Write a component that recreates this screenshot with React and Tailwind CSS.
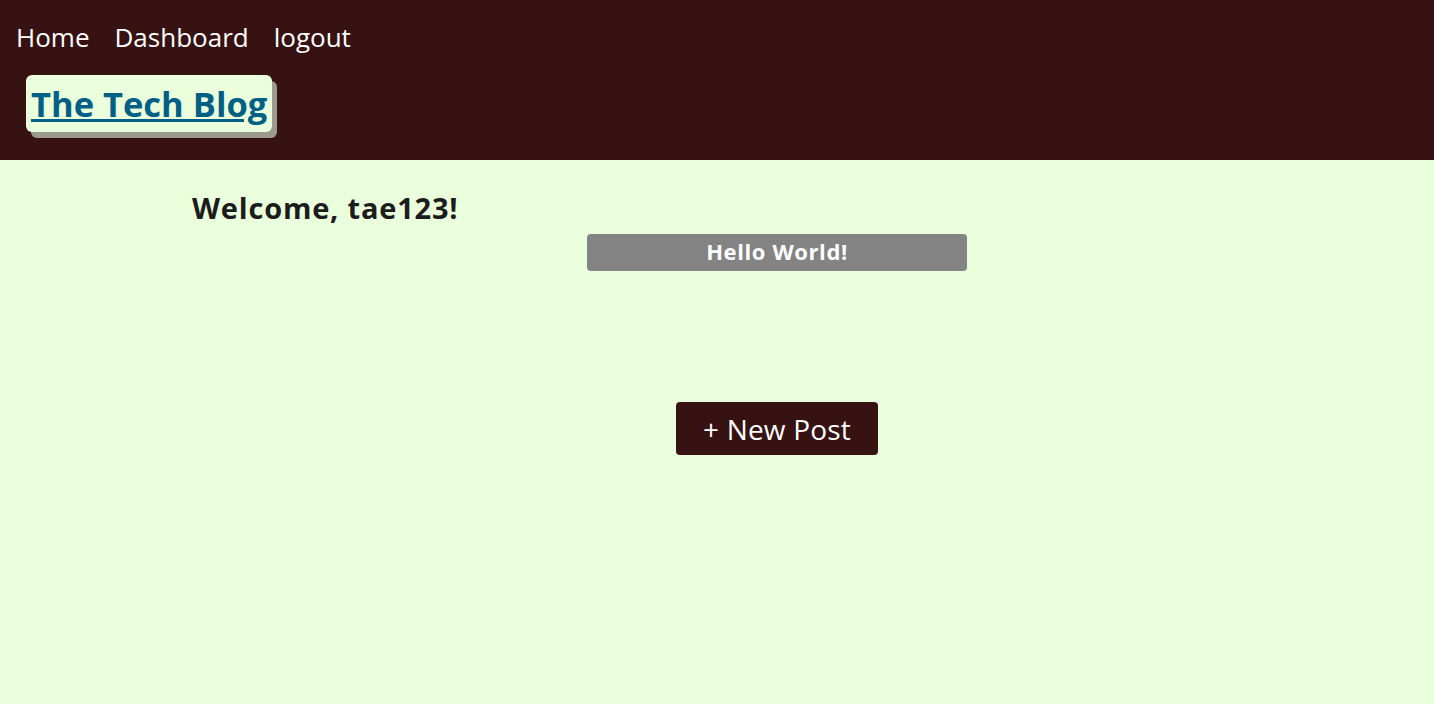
// App.jsx
const App = () => {
  return (
    <div className="min-h-screen bg-[#eaffdc] font-['Open_Sans',sans-serif]">
      <header className="h-[160px] bg-[#361213] pt-[18px]">
        <nav className="flex gap-[25px] pl-[16px] text-[26px] leading-[38px] text-white">
          <a href="#">Home</a>
          <a href="#">Dashboard</a>
          <a href="#">logout</a>
        </nav>
        <div className="mt-[19px] ml-[26px] inline-block rounded-[6px] bg-[#eaffdc] px-[5px] h-[57px] shadow-[5px_6px_0_#9a9a8e]">
          <a href="#" className="text-[34.5px] leading-[58px] font-bold text-[#005f85] underline">
            The Tech Blog
          </a>
        </div>
      </header>

      <main className="ml-[192px] w-[1170px] pt-[28px]">
        <h2 className="text-[29px] leading-[40px] font-bold text-[#1c1c1c] tracking-[0.8px]">Welcome, tae123!</h2>
        <div className="mt-[6px] flex justify-center">
          <div className="w-[380px] h-[37px] rounded-[4px] bg-[#838383] text-center text-[22px] leading-[34px] font-bold text-white tracking-[0.6px]">
            Hello World!
          </div>
        </div>
        <div className="mt-[131px] flex justify-center">
          <button className="h-[53px] px-[27px] rounded-[4px] bg-[#361213] text-[28px] text-white tracking-[0.2px]">
            + New Post
          </button>
        </div>
      </main>
    </div>
  );
};

export default App;
